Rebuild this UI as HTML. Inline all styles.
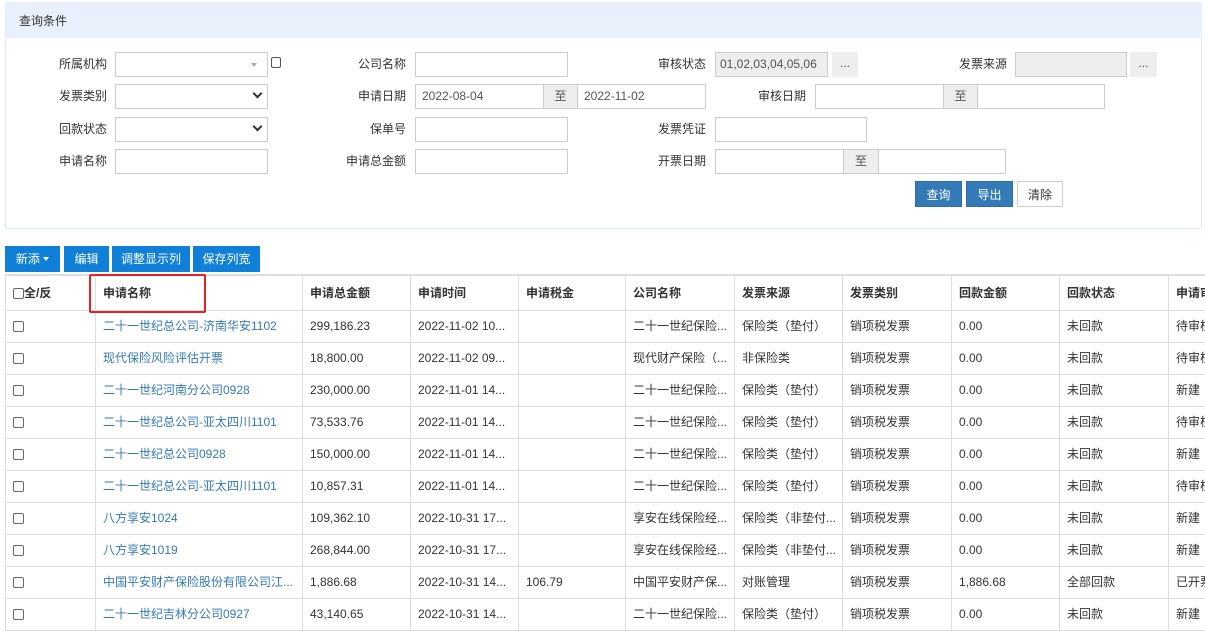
<!DOCTYPE html>
<html><head><meta charset="utf-8"><style>
*{box-sizing:border-box;margin:0;padding:0}
body{width:1205px;height:617px;overflow:hidden;background:#fff;font-family:"Liberation Sans","Noto Sans CJK SC",sans-serif;font-size:12px;color:#333;position:relative}
.a{position:absolute}
.panel{left:5px;top:2px;width:1197px;height:227px;border:1px solid #e3e8ee;border-top:none}
.ph{left:5px;top:2px;width:1197px;height:36px;background:#e8f1fb;padding:10px 0 0 14px;font-size:12px;color:#333}
.lb{text-align:right;width:90px;line-height:25px;height:25px}
.in{height:25px;border:1px solid #ccc;background:#fff;line-height:23px;padding-left:6px;color:#555}
.gr{background:#eee}
.zh{background:#eee;border:1px solid #ccc;height:25px;text-align:center;line-height:23px;color:#555}
.btn{height:26px;line-height:26px;text-align:center;color:#fff;font-size:12px}
.b1{background:#337ab7;border:1px solid #2e6da4}
.b2{background:#0f7fd8}
.chev{position:absolute;right:6px;top:5px;width:7px;height:7px;border-right:2px solid #333;border-bottom:2px solid #333;transform:rotate(45deg)}
table{border-collapse:collapse;table-layout:fixed;position:absolute;left:5px;top:274px;width:1271px;border-top:2px solid #ddd}
td,th{border:1px solid #ddd;height:32px;padding:0 7px;white-space:nowrap;overflow:hidden;text-align:left;font-size:12px;vertical-align:middle;line-height:16px}
th{height:35px;font-weight:bold;color:#333}
td a{color:#337ab7;text-decoration:none}
.cb{display:inline-block;width:11px;height:11px;border:1px solid #666;border-radius:2px;vertical-align:middle}
</style></head><body>
<div class="a panel"></div>
<div class="a ph">查询条件</div>

<div class="a lb" style="left:17px;top:52px">所属机构</div>
<div class="a in" style="left:115px;top:52px;width:153px"><span style="position:absolute;right:10px;top:10px;border:3px solid transparent;border-top:4px solid #aaa"></span></div>
<div class="a" style="left:271px;top:57px;width:10px;height:11px;border:1px solid #555;border-radius:2px"></div>
<div class="a lb" style="left:17px;top:84px">发票类别</div>
<div class="a in" style="left:115px;top:84px;width:153px"><span class="chev"></span></div>
<div class="a lb" style="left:17px;top:117px">回款状态</div>
<div class="a in" style="left:115px;top:117px;width:153px"><span class="chev"></span></div>
<div class="a lb" style="left:17px;top:149px">申请名称</div>
<div class="a in" style="left:115px;top:149px;width:153px"></div>

<div class="a lb" style="left:316px;top:52px">公司名称</div>
<div class="a in" style="left:415px;top:52px;width:153px"></div>
<div class="a lb" style="left:316px;top:84px">申请日期</div>
<div class="a in" style="left:415px;top:84px;width:129px">2022-08-04</div>
<div class="a zh" style="left:543px;top:84px;width:35px">至</div>
<div class="a in" style="left:577px;top:84px;width:129px">2022-11-02</div>
<div class="a lb" style="left:316px;top:117px">保单号</div>
<div class="a in" style="left:415px;top:117px;width:153px"></div>
<div class="a lb" style="left:316px;top:149px">申请总金额</div>
<div class="a in" style="left:415px;top:149px;width:153px"></div>

<div class="a lb" style="left:616px;top:52px">审核状态</div>
<div class="a in gr" style="left:715px;top:52px;width:113px;padding-left:4px">01,02,03,04,05,06</div>
<div class="a zh" style="left:832px;top:52px;width:26px;border:none">...</div>
<div class="a lb" style="left:716px;top:84px">审核日期</div>
<div class="a in" style="left:815px;top:84px;width:129px"></div>
<div class="a zh" style="left:943px;top:84px;width:35px">至</div>
<div class="a in" style="left:977px;top:84px;width:128px"></div>
<div class="a lb" style="left:616px;top:117px">发票凭证</div>
<div class="a in" style="left:715px;top:117px;width:152px"></div>
<div class="a lb" style="left:616px;top:149px">开票日期</div>
<div class="a in" style="left:715px;top:149px;width:129px"></div>
<div class="a zh" style="left:843px;top:149px;width:36px">至</div>
<div class="a in" style="left:878px;top:149px;width:128px"></div>
<div class="a lb" style="left:917px;top:52px">发票来源</div>
<div class="a in gr" style="left:1015px;top:52px;width:112px"></div>
<div class="a zh" style="left:1130px;top:52px;width:27px;border:none">...</div>

<div class="a btn b1" style="left:915px;top:181px;width:47px">查询</div>
<div class="a btn b1" style="left:966px;top:181px;width:47px">导出</div>
<div class="a btn" style="left:1017px;top:181px;width:46px;border:1px solid #ccc;color:#333;background:#fff">清除</div>

<div class="a btn b2" style="left:5px;top:246px;width:55px">新添 <span style="display:inline-block;border:3px solid transparent;border-top:4px solid #fff;vertical-align:-1px"></span></div>
<div class="a btn b2" style="left:64px;top:246px;width:45px">编辑</div>
<div class="a btn b2" style="left:112px;top:246px;width:78px">调整显示列</div>
<div class="a btn b2" style="left:193px;top:246px;width:67px">保存列宽</div>

<table>
<colgroup><col style="width:90px"><col style="width:207px"><col style="width:108px"><col style="width:108px"><col style="width:107px"><col style="width:109px"><col style="width:108px"><col style="width:109px"><col style="width:108px"><col style="width:109px"><col style="width:108px"></colgroup>
<tr><th style="padding-left:7px"><span class="cb"></span>全/反</th><th>申请名称</th><th>申请总金额</th><th>申请时间</th><th>申请税金</th><th>公司名称</th><th>发票来源</th><th>发票类别</th><th>回款金额</th><th>回款状态</th><th>申请审核状态</th></tr>
<tr><td><span class="cb"></span></td><td><a>二十一世纪总公司-济南华安1102</a></td><td>299,186.23</td><td>2022-11-02 10...</td><td></td><td>二十一世纪保险...</td><td>保险类（垫付）</td><td>销项税发票</td><td>0.00</td><td>未回款</td><td>待审核</td></tr>
<tr><td><span class="cb"></span></td><td><a>现代保险风险评估开票</a></td><td>18,800.00</td><td>2022-11-02 09...</td><td></td><td>现代财产保险（...</td><td>非保险类</td><td>销项税发票</td><td>0.00</td><td>未回款</td><td>待审核</td></tr>
<tr><td><span class="cb"></span></td><td><a>二十一世纪河南分公司0928</a></td><td>230,000.00</td><td>2022-11-01 14...</td><td></td><td>二十一世纪保险...</td><td>保险类（垫付）</td><td>销项税发票</td><td>0.00</td><td>未回款</td><td>新建</td></tr>
<tr><td><span class="cb"></span></td><td><a>二十一世纪总公司-亚太四川1101</a></td><td>73,533.76</td><td>2022-11-01 14...</td><td></td><td>二十一世纪保险...</td><td>保险类（垫付）</td><td>销项税发票</td><td>0.00</td><td>未回款</td><td>待审核</td></tr>
<tr><td><span class="cb"></span></td><td><a>二十一世纪总公司0928</a></td><td>150,000.00</td><td>2022-11-01 14...</td><td></td><td>二十一世纪保险...</td><td>保险类（垫付）</td><td>销项税发票</td><td>0.00</td><td>未回款</td><td>新建</td></tr>
<tr><td><span class="cb"></span></td><td><a>二十一世纪总公司-亚太四川1101</a></td><td>10,857.31</td><td>2022-11-01 14...</td><td></td><td>二十一世纪保险...</td><td>保险类（垫付）</td><td>销项税发票</td><td>0.00</td><td>未回款</td><td>待审核</td></tr>
<tr><td><span class="cb"></span></td><td><a>八方享安1024</a></td><td>109,362.10</td><td>2022-10-31 17...</td><td></td><td>享安在线保险经...</td><td>保险类（非垫付...</td><td>销项税发票</td><td>0.00</td><td>未回款</td><td>新建</td></tr>
<tr><td><span class="cb"></span></td><td><a>八方享安1019</a></td><td>268,844.00</td><td>2022-10-31 17...</td><td></td><td>享安在线保险经...</td><td>保险类（非垫付...</td><td>销项税发票</td><td>0.00</td><td>未回款</td><td>新建</td></tr>
<tr><td><span class="cb"></span></td><td><a>中国平安财产保险股份有限公司江...</a></td><td>1,886.68</td><td>2022-10-31 14...</td><td>106.79</td><td>中国平安财产保...</td><td>对账管理</td><td>销项税发票</td><td>1,886.68</td><td>全部回款</td><td>已开票</td></tr>
<tr><td><span class="cb"></span></td><td><a>二十一世纪吉林分公司0927</a></td><td>43,140.65</td><td>2022-10-31 14...</td><td></td><td>二十一世纪保险...</td><td>保险类（垫付）</td><td>销项税发票</td><td>0.00</td><td>未回款</td><td>新建</td></tr>
</table>
<div class="a" style="left:89px;top:274px;width:117px;height:39px;border:2px solid #e82020;border-radius:2px"></div>
</body></html>
